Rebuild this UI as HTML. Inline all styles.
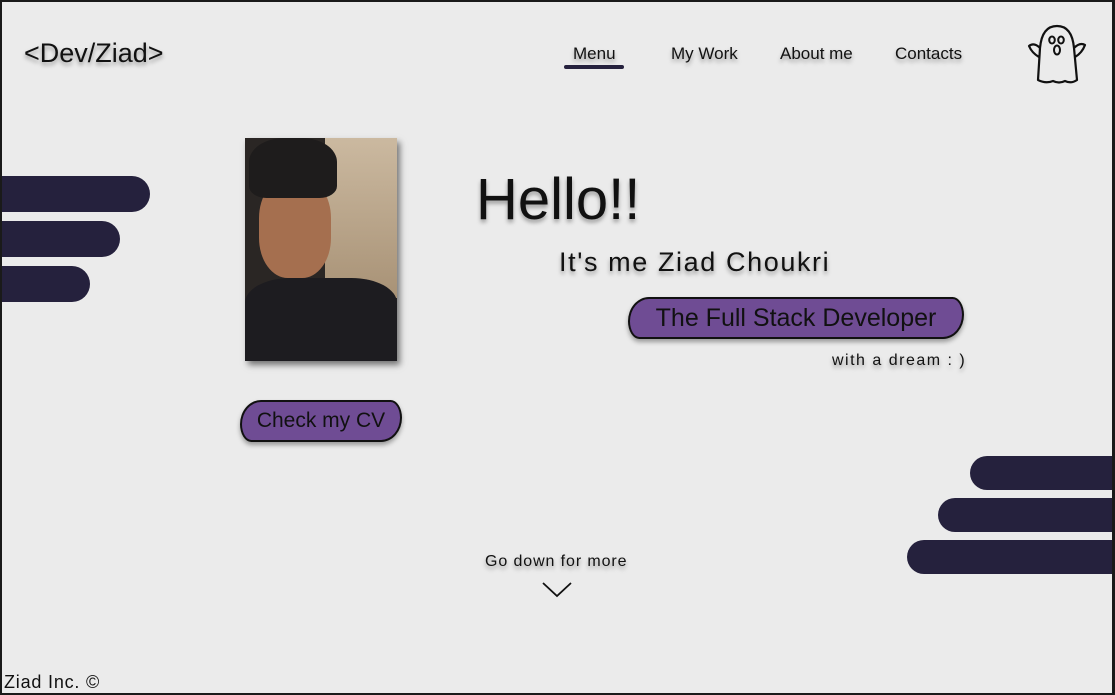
<!DOCTYPE html>
<html><head><meta charset="utf-8"><style>
html,body{margin:0;padding:0}
body{width:1115px;height:695px;overflow:hidden;background:#1a1a1a;font-family:"Liberation Sans",sans-serif;position:relative}
.page{position:absolute;left:2px;top:2px;width:1110px;height:691px;background:#ebebeb;overflow:hidden}
.t{position:absolute;color:#111;text-shadow:0 3px 4px rgba(0,0,0,.35);white-space:nowrap}
.bar{position:absolute;background:#25213d;border-radius:18px}
.pill{position:absolute;background:#6f4c94;border:2px solid #111;border-radius:26px 14px 26px 14px/30px 22px 30px 22px;box-shadow:0 3px 5px rgba(0,0,0,.35);color:#111;text-align:center}
</style></head><body><div class="page">
<div class="t" style="left:22px;top:36px;font-size:27px">&lt;Dev/Ziad&gt;</div>
<div class="t" style="left:571px;top:42px;font-size:17px">Menu</div>
<div style="position:absolute;left:562px;top:63px;width:60px;height:4px;border-radius:2px;background:#25213d"></div>
<div class="t" style="left:669px;top:42px;font-size:17px">My Work</div>
<div class="t" style="left:778px;top:42px;font-size:17px">About me</div>
<div class="t" style="left:893px;top:42px;font-size:17px">Contacts</div>
<svg style="position:absolute;left:1024px;top:18px" width="62" height="66" viewBox="0 0 62 66"><path d="M12 60 L14 28 Q16 6 31 6 Q46 6 48 28 L51 60 Q45 64 39 61 Q33 64 27 61 Q20 64 12 60 Z M14 28 Q8 22 3 26 Q6 33 13 37 M48 28 Q54 22 59 25 Q56 33 49 37" fill="none" stroke="#111" stroke-width="2.2" stroke-linejoin="round"/><ellipse cx="26" cy="20" rx="2.8" ry="3.5" fill="none" stroke="#111" stroke-width="2"/><ellipse cx="35" cy="20" rx="2.8" ry="3.5" fill="none" stroke="#111" stroke-width="2"/><ellipse cx="31" cy="30" rx="3" ry="4.5" fill="none" stroke="#111" stroke-width="2"/></svg>
<div class="bar" style="left:-20px;top:174px;width:168px;height:36px"></div>
<div class="bar" style="left:-20px;top:219px;width:138px;height:36px"></div>
<div class="bar" style="left:-20px;top:264px;width:108px;height:36px"></div>
<div class="bar" style="left:968px;top:454px;width:170px;height:34px"></div>
<div class="bar" style="left:936px;top:496px;width:200px;height:34px"></div>
<div class="bar" style="left:905px;top:538px;width:230px;height:34px"></div>
<div style="position:absolute;left:243px;top:136px;width:152px;height:223px;box-shadow:3px 4px 6px rgba(0,0,0,.5);background:#2a2624;overflow:hidden">
<div style="position:absolute;left:80px;top:0;width:72px;height:160px;background:linear-gradient(#cbb9a0,#a89276)"></div>
<div style="position:absolute;left:14px;top:40px;width:72px;height:100px;border-radius:40%;background:#a56f4f"></div>
<div style="position:absolute;left:4px;top:0;width:88px;height:60px;border-radius:40% 40% 20% 20%;background:#1e1c1c"></div>
<div style="position:absolute;left:0;top:140px;width:152px;height:83px;background:#1d1c20;border-radius:30% 30% 0 0"></div>
</div>
<div class="pill" style="left:238px;top:398px;width:158px;height:38px;line-height:38px;font-size:21px">Check my CV</div>
<div class="t" style="left:474px;top:164px;font-size:58px">Hello!!</div>
<div class="t" style="left:557px;top:245px;font-size:27px;letter-spacing:1.6px">It's me Ziad Choukri</div>
<div class="pill" style="left:626px;top:295px;width:332px;height:38px;line-height:38px;font-size:25px">The Full Stack Developer</div>
<div class="t" style="left:830px;top:350px;font-size:16px;letter-spacing:1.5px">with a dream : )</div>
<div class="t" style="left:483px;top:551px;font-size:16px;letter-spacing:.9px">Go down for more</div>
<svg style="position:absolute;left:540px;top:580px" width="30" height="16"><path d="M1 1 L15 14 L29 1" fill="none" stroke="#111" stroke-width="1.8"/></svg>
<div style="position:absolute;left:2px;top:670px;font-size:18px;letter-spacing:.8px;color:#111">Ziad Inc. ©</div>
</div></body></html>
